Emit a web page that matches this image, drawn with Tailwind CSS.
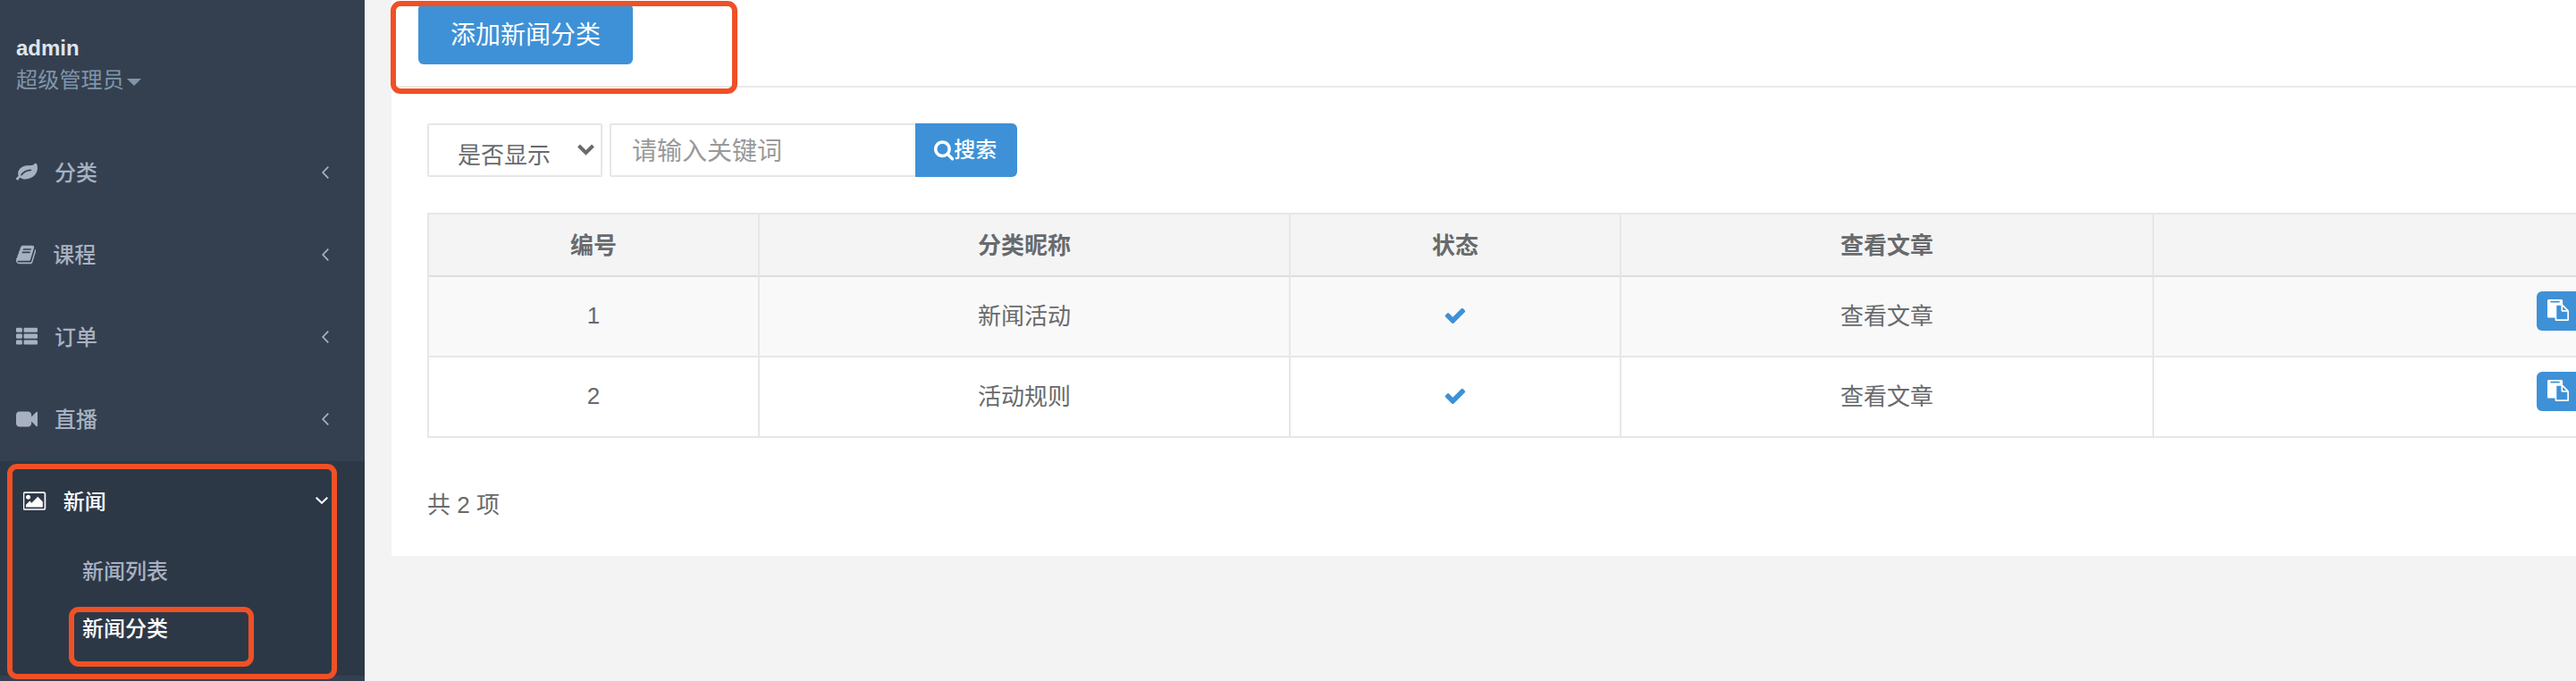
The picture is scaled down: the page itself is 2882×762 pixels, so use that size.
<!DOCTYPE html>
<html lang="zh-CN">
<head>
<meta charset="utf-8">
<title>新闻分类</title>
<script src="https://cdn.jsdelivr.net/npm/@tailwindcss/browser@4"></script>
</head>
<body class="relative flex h-[762px] w-[2882px] overflow-hidden bg-[#f3f3f3] text-[26px] leading-none text-[#686a6c] font-['Liberation_Sans','Noto_Sans_CJK_SC',sans-serif]">
<svg class="hidden">
  <symbol id="check" viewBox="0 0 1792 1792"><path d="M1671 566q0 40-28 68l-724 724-136 136q-28 28-68 28t-68-28l-136-136-362-362q-28-28-28-68t28-68l136-136q28-28 68-28t68 28l294 295 656-657q28-28 68-28t68 28l136 136q28 28 28 68z"/></symbol>
  <symbol id="paste" viewBox="0 0 1792 1792"><path d="M768 1664h896v-640h-416q-40 0-68-28t-28-68v-416h-384v1152zm256-1440v-64q0-13-9.5-22.5t-22.5-9.5h-704q-13 0-22.5 9.5t-9.5 22.5v64q0 13 9.5 22.5t22.5 9.5h704q13 0 22.5-9.5t9.5-22.5zm256 672h299l-299-299v299zm512 128v672q0 40-28 68t-68 28h-960q-40 0-68-28t-28-68v-160h-544q-40 0-68-28t-28-68v-1344q0-40 28-68t68-28h1088q40 0 68 28t28 68v328q21 13 36 28l408 408q28 28 48 76t20 88z"/></symbol>
  <symbol id="left" viewBox="0 0 8 14"><path d="M7.3 .7 1.2 7l6.100 6.300" fill="none" stroke="currentColor" stroke-width="1.700"/></symbol>
</svg>

<aside class="flex w-[408px] shrink-0 flex-col bg-[#344050] text-2xl leading-none font-medium text-[#a7b1c2]">
  <div class="h-[148px] pt-[42px] pl-[18px]">
    <div class="font-bold leading-6 text-[#dfe4ed]">admin</div>
    <div class="mt-3 flex items-center font-normal leading-6 tracking-[0.2px] text-[#8095a8]">超级管理员<svg class="mt-1 ml-[3px] h-2 w-4 fill-current" viewBox="0 0 16 8"><path d="M0 0h16L8 8z"/></svg></div>
  </div>
  <nav>
    <a class="flex h-[92px] items-center pr-10 pl-[18px]">
      <svg class="mb-[2px] h-6 w-6 fill-current" viewBox="0 0 1792 1792"><path d="M1280 704q0-26-19-45t-45-19q-172 0-318 49.500t-259.500 134-235.500 219.500q-19 21-19 45 0 26 19 45t45 19q24 0 45-19 27-24 74-71t67-66q137-124 268.500-176t313.500-52q26 0 45-19t19-45zm512-198q0 95-20 193-46 224-184.500 383t-357.500 268q-214 108-438 108-148 0-286-47-15-5-88-42t-96-37q-16 0-39.500 32t-45 70-52.500 70-60 32q-43 0-63.500-17.500t-45.500-59.500q-2-4-6-11t-5.500-10-3-9.500-1.500-13.500q0-35 31-73.500t68-65.500 68-56 31-48q0-4-14-38t-16-44q-9-51-9-104 0-115 43.500-220t119-184.500 170.500-139 204-95.500q55-18 145-25.500t179.500-9 178.500-6 163.500-24 113.500-56.500l29.500-29.500 29.500-28 27-20 36.500-16 43.500-4.500q39 0 70.500 46t47.500 112 24 124 8 96z"/></svg>
      <span class="ml-[19px] flex-1">分类</span>
      <svg class="mb-[3px] h-[14px] w-2"><use href="#left"/></svg>
    </a>
    <a class="flex h-[92px] items-center pr-10 pl-[18px]">
      <svg class="mb-[2px] h-6 w-[22.3px] fill-current" viewBox="64 0 1664 1792"><path d="M1703 478q40 57 18 129l-275 906q-19 64-76.500 107.500t-122.500 43.500h-923q-77 0-148.500-53.500t-99.500-131.500q-24-67-2-127 0-4 3-27t4-37q1-8-3-21.500t-3-19.500q2-11 8-21t16.500-23.500 16.500-23.500q23-38 45-91.500t30-91.500q3-10 .5-30t-.5-28q3-11 17-28t17-23q21-36 42-92t25-90q1-9-2.500-32t.5-28q4-13 22-30.500t22-22.500q19-26 42.500-84.500t27.500-96.500q1-8-3-25.500t-2-26.500q2-8 9-18t18-23 17-21q8-12 16.500-30.500t15-35 16-36 19.500-32 26.500-23.500 36-11.500 47.500 5.500l-1 3q38-9 51-9h761q74 0 114 56t18 130l-274 906q-36 119-71.500 153.500t-128.500 34.500h-869q-27 0-38 15-11 16-1 43 24 70 144 70h923q29 0 56-15.500t35-41.500l300-987q7-22 5-57 38 15 59 43zm-1064 2q-4 13 2 22.500t20 9.500h608q13 0 25.500-9.500t16.500-22.500l21-64q4-13-2-22.500t-20-9.500h-608q-13 0-25.500 9.500t-16.500 22.500zm-83 256q-4 13 2 22.500t20 9.500h608q13 0 25.500-9.500t16.500-22.500l21-64q4-13-2-22.500t-20-9.500h-608q-13 0-25.500 9.500t-16.500 22.500z"/></svg>
      <span class="ml-[19px] flex-1">课程</span>
      <svg class="mb-[3px] h-[14px] w-2"><use href="#left"/></svg>
    </a>
    <a class="flex h-[92px] items-center pr-10 pl-[18px]">
      <svg class="mb-[2px] h-6 w-6 fill-current" viewBox="0 0 1792 1792"><rect y="128" width="512" height="384" rx="96"/><rect y="640" width="512" height="384" rx="96"/><rect y="1152" width="512" height="384" rx="96"/><rect x="640" y="128" width="1152" height="384" rx="96"/><rect x="640" y="640" width="1152" height="384" rx="96"/><rect x="640" y="1152" width="1152" height="384" rx="96"/></svg>
      <span class="ml-[19px] flex-1">订单</span>
      <svg class="mb-[3px] h-[14px] w-2"><use href="#left"/></svg>
    </a>
    <a class="flex h-[92px] items-center pr-10 pl-[18px]">
      <svg class="mb-[2px] h-6 w-6 fill-current" viewBox="0 0 1792 1792"><path d="M1792 352v1088q0 42-39 59-13 5-25 5-27 0-45-19l-403-403v166q0 119-84.500 203.500t-203.500 84.500h-704q-119 0-203.500-84.500t-84.500-203.500v-704q0-119 84.500-203.500t203.500-84.500h704q119 0 203.500 84.500t84.500 203.500v165l403-402q18-19 45-19 12 0 25 5 39 17 39 59z"/></svg>
      <span class="ml-[19px] flex-1">直播</span>
      <svg class="mb-[3px] h-[14px] w-2"><use href="#left"/></svg>
    </a>
    <div class="h-[240px] bg-[#2d3846] pl-2">
      <a class="flex h-[92px] items-center pr-[41px] pl-[18px] text-white">
        <svg class="mb-[2px] h-6 w-[25.7px] fill-current" viewBox="0 0 1920 1792"><path d="M576 576q0 80-56 136t-136 56-136-56-56-136 56-136 136-56 136 56 56 136zm1024 384v448h-1408v-192l320-320 160 160 512-512zm96-704h-1600q-13 0-22.500 9.500t-9.500 22.500v1216q0 13 9.500 22.500t22.500 9.500h1600q13 0 22.500-9.500t9.500-22.500v-1216q0-13-9.500-22.500t-22.500-9.500zm160 32v1216q0 66-47 113t-113 47h-1600q-66 0-113-47t-47-113v-1216q0-66 47-113t113-47h1600q66 0 113 47t47 113z" transform="translate(32 -32)"/></svg>
        <span class="ml-[19px] flex-1">新闻</span>
        <svg class="mb-1 h-2 w-[14px]" viewBox="0 0 14 8"><path d="M.7 .7 7 6.800 13.300 .7" fill="none" stroke="currentColor" stroke-width="2"/></svg>
      </a>
      <a class="flex h-16 items-center pl-[84px]">新闻列表</a>
      <a class="flex h-16 items-center pl-[84px] text-white">新闻分类</a>
    </div>
  </nav>
</aside>

<main class="ml-[30px] h-[622px] flex-1 overflow-hidden bg-white">
  <div class="h-[98px] border-b-2 border-[#e7eaec] pt-1 pl-[30px]">
    <a class="flex h-[68px] w-[240px] items-center justify-center rounded-md bg-[#3e91d6] pt-[3px] text-[28px] text-white">添加新闻分类</a>
  </div>
  <div class="pt-10 pl-10">
    <form class="flex h-[60px]">
      <div class="flex w-[196px] items-center justify-between rounded-xs border-2 border-[#e5e6e7] pt-[11px] pr-[7px] pl-8">是否显示<svg class="mb-[13px] h-[13px] w-[19px]" viewBox="0 0 19 13"><path d="M1.500 2 9.500 10l8-8" fill="none" stroke="currentColor" stroke-width="4"/></svg></div>
      <div class="ml-2 flex w-[342px] items-center rounded-l-xs border-2 border-r-0 border-[#e5e6e7] pt-[3px] pl-[23px] text-[28px] text-[#999]">请输入关键词</div>
      <div class="flex w-[114px] items-center rounded-r-md bg-[#3e91d6] pl-[21px] text-2xl leading-none font-medium text-white"><svg class="h-6 w-[22.3px] fill-current" viewBox="64 0 1664 1792"><path d="M1216 832q0-185-131.500-316.500t-316.500-131.500-316.500 131.500-131.500 316.500 131.500 316.500 316.500 131.500 316.500-131.500 131.500-316.500zm512 832q0 52-38 90t-90 38q-54 0-90-38l-343-342q-179 124-399 124-143 0-273.500-55.500t-225-150-150-225-55.500-273.500 55.500-273.500 150-225 225-150 273.500-55.500 273.500 55.500 225 150 150 225 55.500 273.500q0 220-124 399l343 343q37 37 37 90z" transform="translate(0 -30)"/></svg>搜索</div>
    </form>
    <div class="mt-10 border-t-2 border-l-2 border-[#e7e7e7] text-center">
      <div class="grid h-[70px] grid-cols-[370px_594px_370px_596px_1fr] bg-[#f4f4f5] font-bold *:flex *:items-center *:justify-center *:border-r-2 *:border-b-2 *:border-r-[#e7e7e7] *:border-b-[#dddddd] *:pt-[2px] *:last:border-r-0">
        <div>编号</div><div>分类昵称</div><div>状态</div><div>查看文章</div><div></div>
      </div>
      <div class="grid h-[90px] grid-cols-[370px_594px_370px_596px_1fr] bg-[#f9f9f9] *:flex *:items-center *:justify-center *:border-r-2 *:border-b-2 *:border-[#e7e7e7] *:last:border-r-0">
        <div class="pb-[2px]">1</div><div class="pb-px">新闻活动</div><div><svg class="mb-[2px] h-[26px] w-[26px] fill-[#3e91d6]"><use href="#check"/></svg></div><div class="pb-px">查看文章</div>
        <div class="overflow-hidden"><span class="-mr-7 mb-3 ml-auto flex h-11 w-[72px] shrink-0 items-center rounded-md bg-[#3e91d6] pb-[2px] pl-3"><svg class="h-6 w-6 fill-white"><use href="#paste"/></svg></span></div>
      </div>
      <div class="grid h-[90px] grid-cols-[370px_594px_370px_596px_1fr] *:flex *:items-center *:justify-center *:border-r-2 *:border-b-2 *:border-[#e7e7e7] *:last:border-r-0">
        <div class="pb-[2px]">2</div><div class="pb-px">活动规则</div><div><svg class="mb-[2px] h-[26px] w-[26px] fill-[#3e91d6]"><use href="#check"/></svg></div><div class="pb-px">查看文章</div>
        <div class="overflow-hidden"><span class="-mr-7 mb-3 ml-auto flex h-11 w-[72px] shrink-0 items-center rounded-md bg-[#3e91d6] pb-[2px] pl-3"><svg class="h-6 w-6 fill-white"><use href="#paste"/></svg></span></div>
      </div>
    </div>
    <div class="mt-[62px]">共 2 项</div>
  </div>
</main>

<!-- Highlight frames over the page -->
<div class="absolute top-px left-[437px] h-[104px] w-[388px] rounded-[11px] border-6 border-[#f05025]"></div>
<div class="absolute top-[519px] left-[8px] h-[241px] w-[369px] rounded-[11px] border-6 border-[#f05025]"></div>
<div class="absolute top-[679px] left-[77px] h-[67px] w-[207px] rounded-[11px] border-6 border-[#f05025]"></div>
</body>
</html>
